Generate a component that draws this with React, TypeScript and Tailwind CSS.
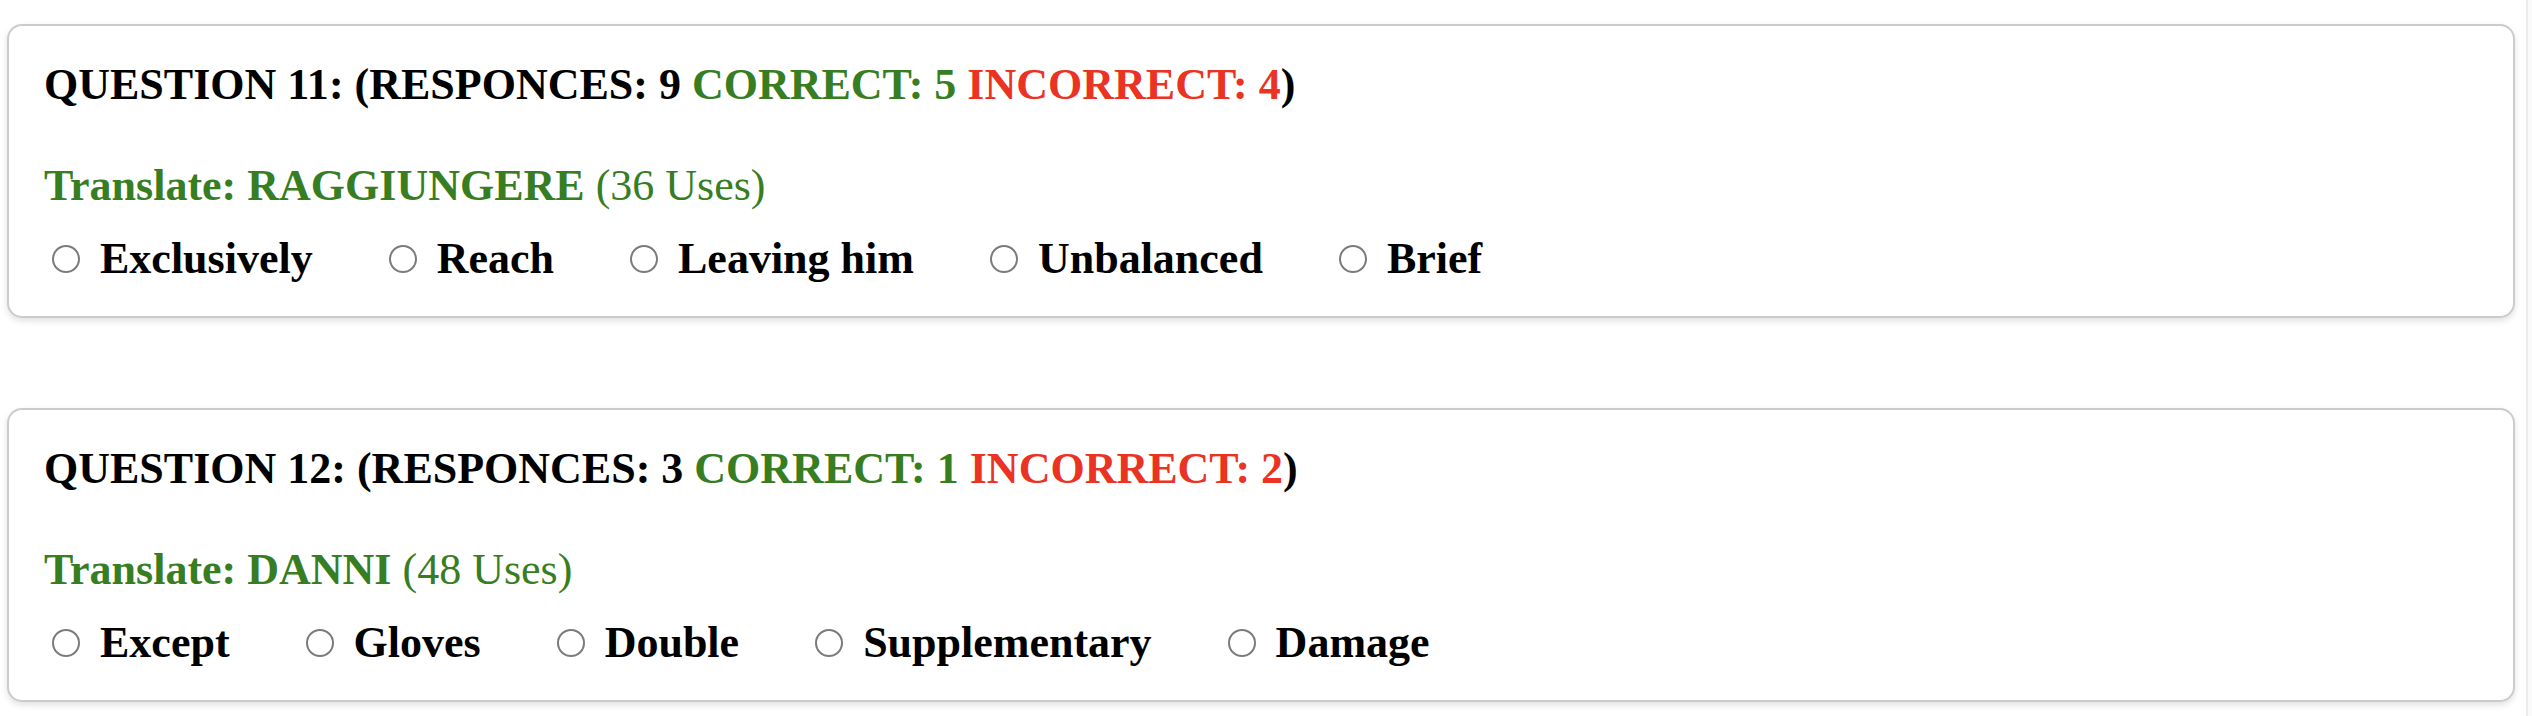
import React from "react";

const GREEN = "text-[#377d22]";
const RED = "text-[#eb3323]";

type Q = {
  n: number;
  responses: number;
  correct: number;
  incorrect: number;
  word: string;
  uses: number;
  options: string[];
};

const questions: Q[] = [
  {
    n: 11,
    responses: 9,
    correct: 5,
    incorrect: 4,
    word: "RAGGIUNGERE",
    uses: 36,
    options: ["Exclusively", "Reach", "Leaving him", "Unbalanced", "Brief"],
  },
  {
    n: 12,
    responses: 3,
    correct: 1,
    incorrect: 2,
    word: "DANNI",
    uses: 48,
    options: ["Except", "Gloves", "Double", "Supplementary", "Damage"],
  },
];

function Radio() {
  return (
    <span className="ml-[8px] inline-block h-[28px] w-[28px] shrink-0 rounded-full border-2 border-[#7b7b7b] bg-white" />
  );
}

function Card({ q }: { q: Q }) {
  return (
    <div className="rounded-[15px] border-2 border-[#cccccc] bg-white pb-[32px] pl-[35px] pt-[33px] shadow-[0_3px_6px_rgba(0,0,0,0.12)]">
      <div className="font-bold leading-[51px] text-black">
        QUESTION {q.n}: (RESPONCES: {q.responses}{" "}
        <span className={GREEN}>CORRECT: {q.correct}</span>{" "}
        <span className={RED}>INCORRECT: {q.incorrect}</span>)
      </div>
      <div className={`mt-[50px] leading-[51px] ${GREEN}`}>
        <span className="font-bold">Translate: {q.word}</span> ({q.uses} Uses)
      </div>
      <div className="mt-[22px] flex items-center leading-[51px]">
        {q.options.map((o) => (
          <label key={o} className="flex items-center">
            <Radio />
            <span className="ml-[20px] mr-[68px] font-bold text-black">{o}</span>
          </label>
        ))}
      </div>
    </div>
  );
}

export default function App() {
  return (
    <div
      className="flex min-h-[716px] w-full bg-white text-[44px]"
      style={{ fontFamily: '"Liberation Serif", "Times New Roman", serif' }}
    >
      <div className="flex flex-1 flex-col gap-[90px] pl-[7px] pr-[11px] pt-[24px]">
        {questions.map((q) => (
          <Card key={q.n} q={q} />
        ))}
      </div>
      <div className="w-[6px] shrink-0 border-l-2 border-[#ececec] bg-[#fafafa]" />
    </div>
  );
}
